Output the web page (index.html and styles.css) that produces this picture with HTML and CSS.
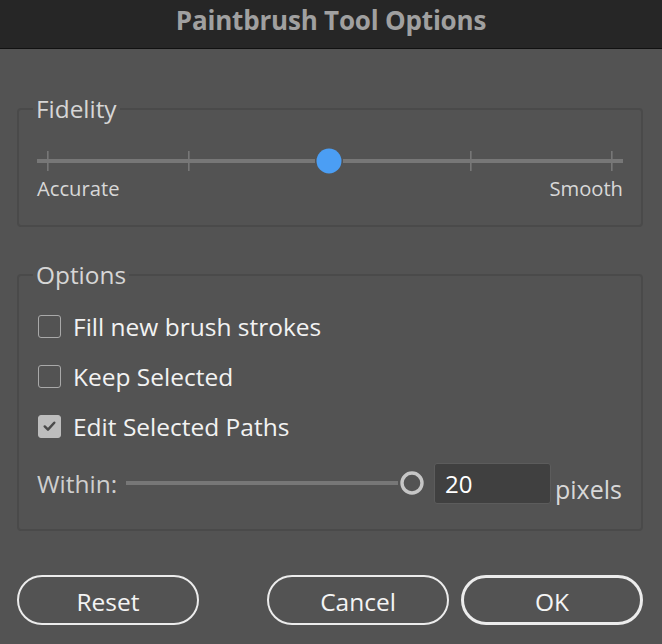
FILE: index.html
```html
<!DOCTYPE html>
<html>
<head>
<meta charset="utf-8">
<link rel="stylesheet" href="styles.css">
</head>
<body>
<div class="dialog">
  <header class="titlebar"><h1 class="title">Paintbrush Tool Options</h1></header>

  <fieldset class="group group-fidelity">
    <legend class="legend">Fidelity</legend>
    <svg class="fidelity-slider" width="586" height="26" viewBox="0 0 586 26">
      <rect x="0" y="11" width="278" height="4" fill="#777777"/>
      <rect x="306" y="11" width="280" height="4" fill="#777777"/>
      <rect x="10" y="3" width="1.6" height="20" fill="#777777"/>
      <rect x="151" y="3" width="1.6" height="20" fill="#777777"/>
      <rect x="433" y="3" width="1.6" height="20" fill="#777777"/>
      <rect x="574" y="3" width="1.6" height="20" fill="#777777"/>
      <circle cx="292" cy="13" r="12.5" fill="#4b9ef4"/>
    </svg>
    <div class="scale-labels"><span>Accurate</span><span>Smooth</span></div>
  </fieldset>

  <fieldset class="group group-options">
    <legend class="legend">Options</legend>
    <label class="check-row"><span class="box"></span><span class="check-text">Fill new brush strokes</span></label>
    <label class="check-row"><span class="box"></span><span class="check-text">Keep Selected</span></label>
    <label class="check-row"><span class="box checked">
      <svg width="22" height="22" viewBox="0 0 22 22"><path d="M6 11.5 L9.4 14.8 L16 7.6" fill="none" stroke="#4a4a4a" stroke-width="2.6" stroke-linecap="round" stroke-linejoin="round"/></svg>
    </span><span class="check-text">Edit Selected Paths</span></label>
    <div class="within-row">
      <span class="within-label">Within:</span>
      <svg class="within-slider" width="298" height="26" viewBox="0 0 298 26">
        <rect x="0" y="11" width="272" height="4" fill="#777777"/>
        <circle cx="286" cy="13" r="10" fill="none" stroke="#c6c6c6" stroke-width="3.4"/>
      </svg>
      <div class="num-input">20</div>
      <span class="unit">pixels</span>
    </div>
  </fieldset>

  <div class="buttons">
    <button class="btn">Reset</button>
    <span class="spacer"></span>
    <button class="btn">Cancel</button>
    <button class="btn btn-default">OK</button>
  </div>
</div>
</body>
</html>
```
FILE: styles.css
```css
* { box-sizing: border-box; }
html, body { margin: 0; padding: 0; }
body {
  background: #535353;
  font-family: "Open Sans", "Noto Sans", sans-serif;
  width: 662px;
  height: 644px;
  overflow: hidden;
}
.titlebar {
  height: 49px;
  background: #262626;
  border-bottom: 1px solid #111111;
  display: flex;
  align-items: center;
  justify-content: center;
}
.title {
  margin: 0;
  font-family: "Open Sans", "Noto Sans", sans-serif;
  font-weight: 700;
  font-size: 26px;
  color: #a0a0a0;
  line-height: 1;
  padding-bottom: 8px;
  letter-spacing: -0.2px;
}
.group {
  margin: 0 19px 0 17px;
  border: 2px solid #4a4a4a;
  border-radius: 4px;
  padding: 0 18px 0 19px;
  min-width: 0;
}
.group-fidelity { margin-top: 48px; padding-top: 27px; padding-bottom: 26px; }
.group-options { margin-top: 36px; padding-top: 14px; padding-bottom: 23px; }
.legend {
  margin-left: -5px;
  padding: 0 3px;
  font-size: 24.4px;
  line-height: 24px;
  color: #d6d6d6;
}
.fidelity-slider { display: block; margin-left: -1px; }
.scale-labels {
  display: flex;
  justify-content: space-between;
  font-size: 20.2px;
  line-height: 22px;
  color: #d8d8d8;
  margin-top: 3px;
  margin-left: -1px;
}
.check-row {
  display: flex;
  align-items: center;
  height: 50px;
  gap: 12px;
}
.box {
  width: 23px;
  height: 23px;
  border: 1.6px solid #a9a9a9;
  border-radius: 3px;
  display: flex;
  align-items: center;
  justify-content: center;
}
.box.checked { background: #bdbdbd; border-color: #bdbdbd; }
.check-text {
  font-size: 24.5px;
  color: #f2f2f2;
}
.within-row {
  display: flex;
  align-items: center;
  height: 46px;
  margin-top: 9px;
}
.within-label {
  font-size: 24.5px;
  color: #cfcfcf;
  width: 89px;
  margin-left: -1px;
}
.within-slider { display: block; }
.num-input {
  width: 117px;
  height: 41px;
  margin-left: 10px;
  background: #404040;
  border: 1.5px solid #5c5c5c;
  border-radius: 3px;
  color: #ffffff;
  font-size: 24px;
  padding-left: 10px;
  display: flex;
  align-items: center;
}
.unit {
  font-size: 25px;
  color: #d8d8d8;
  margin-left: 4px;
  align-self: flex-end;
  line-height: 28px;
  margin-bottom: 3px;
}
.buttons {
  display: flex;
  margin: 44px 19px 0 17px;
  gap: 12px;
}
.spacer { flex: 1; }
.btn {
  width: 182px;
  height: 50px;
  border-radius: 25px;
  border: 2px solid #ececec;
  background: transparent;
  color: #f4f4f4;
  font-family: "Open Sans", "Noto Sans", sans-serif;
  font-size: 24.5px;
  font-weight: 500;
  padding: 2px 0 0;
}
.btn-default { border-width: 3.5px; }
```
